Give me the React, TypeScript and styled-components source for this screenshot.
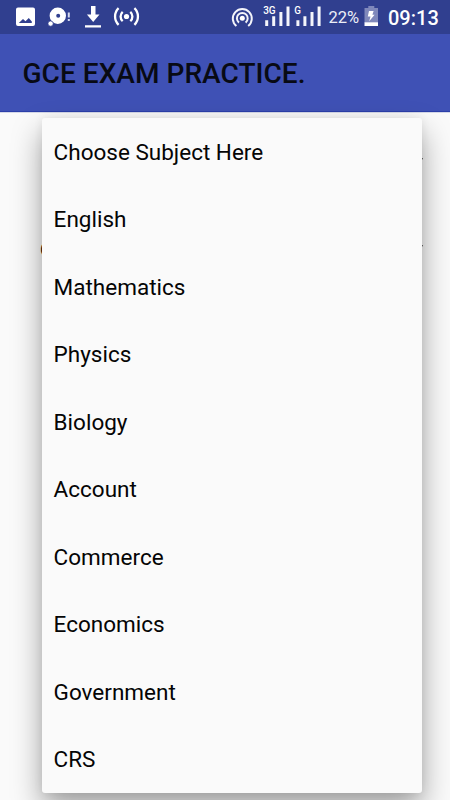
import React from "react";
import styled, { createGlobalStyle } from "styled-components";

const GlobalStyle = createGlobalStyle`
  * { box-sizing: border-box; }
  body { margin: 0; background: #fafafa; overflow: hidden; font-family: Roboto, sans-serif; }
`;

const Screen = styled.div`
  position: relative;
  display: flex;
  flex-direction: column;
  width: 450px;
  height: 800px;
  overflow: hidden;
  background: #fafafa;
`;

const StatusBar = styled.header`
  display: flex;
  justify-content: space-between;
  flex: none;
  height: 34px;
  background: #303f8f;
  color: #fff;
`;

const StatusGroup = styled.div`
  display: flex;
  height: 34px;
`;

const StatusIcons = styled.svg`
  display: block;
  flex: none;
`;

const Battery = styled.span`
  width: 34px;
  padding-left: 0.5px;
  line-height: 36px;
  font-size: 16.5px;
  color: #eceef7;
  white-space: nowrap;
`;

const Clock = styled.time`
  width: 62px;
  line-height: 36px;
  font-size: 20px;
  font-weight: 500;
  white-space: nowrap;
`;

const AppBar = styled.div`
  display: flex;
  align-items: center;
  flex: none;
  height: 78px;
  padding: 3px 0 0 22.5px;
  background: #3f51b5;
  border-bottom: 1px solid #2c3fa9;
`;

const Title = styled.h1`
  margin: 0;
  font-size: 28px;
  line-height: 36px;
  font-weight: 500;
  letter-spacing: 0.04px;
  color: #080a14;
  white-space: nowrap;
`;

const Content = styled.main`
  display: flex;
  flex-direction: column;
  flex: 1;
  padding: 45px 27px 0 40px;
  border-top: 1px solid #d5d8e8;
`;

const Field = styled.div`
  display: flex;
  height: 87px;
`;

const FieldLabel = styled.span`
  height: 22px;
  margin-top: -6px;
  font-size: 18px;
  line-height: 22px;
  color: #111;
`;

const Arrow = styled.svg`
  display: block;
  margin-left: auto;
`;

const Menu = styled.ul`
  position: absolute;
  top: 118px;
  left: 42px;
  width: 380px;
  height: 675px;
  margin: 0;
  padding: 0;
  list-style: none;
  border-radius: 3px;
  background: #fafafa;
  box-shadow: 0 15px 30px rgba(0, 0, 0, 0.36), 0 0 10px rgba(0, 0, 0, 0.07);
`;

const MenuItem = styled.li`
  display: flex;
  align-items: center;
  height: 67.5px;
  padding: 0 12px 0 11.6px;
  font-size: 22.5px;
  color: #050505;
  white-space: nowrap;
`;

const subjects = [
  "Choose Subject Here", "English", "Mathematics", "Physics", "Biology",
  "Account", "Commerce", "Economics", "Government", "CRS",
];

function Notifications() {
  return (
    <StatusIcons width="145" height="34" viewBox="0 0 145 34" fill="none">
      <path fill="#fff" fillRule="evenodd" d="M18 7.5h15a2 2 0 0 1 2 2v14.5a2 2 0 0 1-2 2H18a2 2 0 0 1-2-2V9.500a2 2 0 0 1 2-2Zm.8 15.500h13v-1.500l-3-3.500-3.300 3.200-2.500-2.200Z" />
      <path fill="#fff" fillRule="evenodd" d="M57.8 7.5a8.2 8.2 0 1 1 0 16.4 8.2 8.2 0 0 1 0-16.4Zm.4 6.3a2 2 0 1 0 0 4 2 2 0 0 0 0-4Z" />
      <circle cx="50.6" cy="23.6" r="2.6" fill="#fff" stroke="#303f8f" strokeWidth=".7" />
      <path stroke="#d4d9ef" strokeWidth="2" d="M68.8 12.5v5M68.8 19v2" />
      <path fill="#fff" d="M91 6h4.500v8.500h4L93.200 22l-6.300-7.500H91ZM85 25.200h16v2.300H85Z" />
      <circle cx="126.5" cy="16.5" r="2.6" fill="#fff" />
      <path stroke="#fff" strokeWidth="2.3" d="M122.700 11.800a6.300 6.300 0 0 0 0 9.400M130.300 11.800a6.300 6.300 0 0 1 0 9.400M118.600 8.200a11.500 11.500 0 0 0 0 16.600M134.400 8.200a11.500 11.500 0 0 1 0 16.600" />
    </StatusIcons>
  );
}

function SignalIcons() {
  return (
    <StatusIcons width="97" height="34" viewBox="231 0 97 34" fill="none">
      <circle cx="242.3" cy="18.3" r="2.5" fill="#fff" />
      <path stroke="#f3f4fa" strokeWidth="2" d="M239 22.600a5.400 5.400 0 1 1 6.600 0M236.400 26a9.500 9.500 0 1 1 11.800 0" />
      <g fill="#fff" fontFamily="Roboto, sans-serif" fontSize="11" fontWeight="500">
        <text x="263.200" y="14.200" textLength="12.500" lengthAdjust="spacingAndGlyphs">3G</text>
        <text x="294.300" y="14.200" textLength="6.700" lengthAdjust="spacingAndGlyphs">G</text>
      </g>
      <path stroke="#f4f5fb" strokeWidth="3" d="M266.700 20.200V26M273.700 16.300V26M280.900 12V26M288 6.500V26M297.900 20.200V26M304.900 16.300V26M312 12V26M319.100 6.500V26" />
    </StatusIcons>
  );
}

function BatteryIcon() {
  return (
    <StatusIcons width="26" height="34" viewBox="362 0 26 34">
      <path fill="#7f88bb" d="M364.500 8h3.800V6h6V8h3.700v14.500h-13.500Z" />
      <path fill="#fff" d="M364.500 22.300H378V26h-13.500ZM369 11h4.600l-1.200 3.700h2.200l-5.400 6.500 1.300-4.800h-2.700Z" />
    </StatusIcons>
  );
}

function DropdownArrow() {
  return (
    <Arrow width="12" height="8" viewBox="0 0 12 8">
      <path fill="#444" d="M0 0h12l-1 2-5 5-6-7Z" />
    </Arrow>
  );
}

export default function App() {
  return (
    <>
      <GlobalStyle />
      <Screen>
        <StatusBar>
          <Notifications />
          <StatusGroup>
            <SignalIcons />
            <Battery>22%</Battery>
            <BatteryIcon />
            <Clock>09:13</Clock>
          </StatusGroup>
        </StatusBar>
        <AppBar><Title>GCE EXAM PRACTICE.</Title></AppBar>
        <Content>
          <Field><DropdownArrow /></Field>
          <Field>
            <FieldLabel>C</FieldLabel>
            <DropdownArrow />
          </Field>
        </Content>
        <Menu role="listbox">
          {subjects.map((subject) => (
            <MenuItem key={subject} role="option">{subject}</MenuItem>
          ))}
        </Menu>
      </Screen>
    </>
  );
}
